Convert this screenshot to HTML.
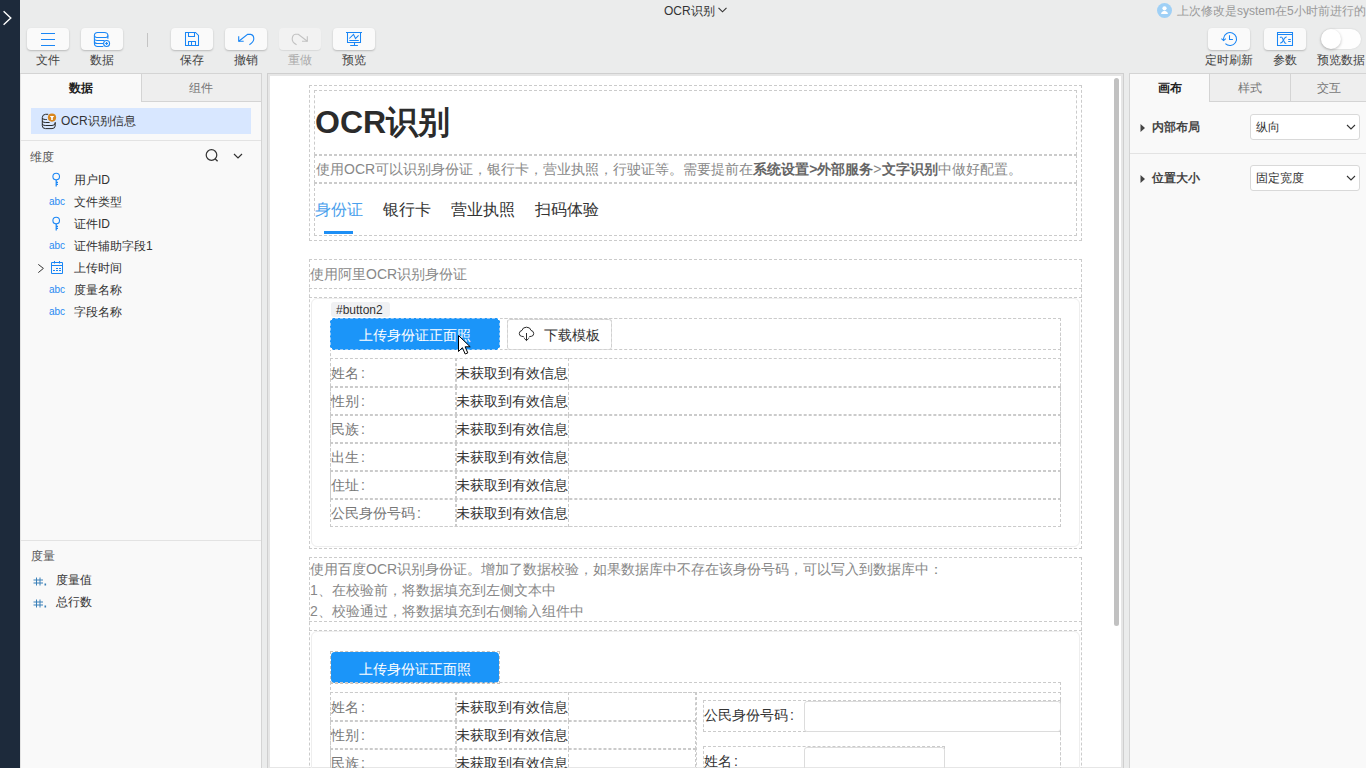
<!DOCTYPE html>
<html><head><meta charset="utf-8">
<style>
*{box-sizing:border-box;margin:0;padding:0}
html,body{width:1366px;height:768px;overflow:hidden;background:#ebecec;font-family:"Liberation Sans",sans-serif;color:#333}
.a{position:absolute}
#strip{left:0;top:0;width:20px;height:768px;background:#1d2a3b}
.tb{width:42px;height:22px;top:28px;background:#fafafa;border-radius:4px;box-shadow:0 1px 2px rgba(0,0,0,.22)}
.tl{top:53px;font-size:12px;width:60px;text-align:center;color:#444;line-height:14px}
.tb svg{position:absolute;left:0;top:0}
#lp{left:20px;top:73px;width:242px;height:695px;background:#f9f9f9;box-shadow:inset 1px 0 0 #e4e4e4;border-top:1px solid #d4d4d4;border-right:1px solid #d4d4d4}
#canvas{left:267px;top:73px;width:857px;height:697px;background:#fff;border:1px solid #cfcfcf;box-shadow:inset 0 0 0 2px #e6e6e6}
#rp{left:1129px;top:73px;width:237px;height:695px;background:#f9f9f9;border-top:1px solid #d4d4d4;border-left:1px solid #d4d4d4}
.d{position:absolute;border:1px dashed #cbcbcb}
.ct{font-size:14px;line-height:16px;position:absolute;white-space:nowrap}
i{display:inline-block;width:1em;text-align:center;font-style:normal}
</style></head><body>
<div id="strip" class="a">
  <svg class="a" style="left:0;top:0" width="20" height="36" viewBox="0 0 20 36"><path d="M3.6 11.2 L10.8 18 L3.6 24.8" fill="none" stroke="#fff" stroke-width="1.4"/></svg>
</div>

<!-- title -->
<div class="a" style="left:664px;top:4px;font-size:12px;line-height:15px;color:#333">OCR<i>识</i><i>别</i></div>
<svg class="a" style="left:717px;top:6px" width="11" height="8" viewBox="0 0 11 8"><path d="M1.5 1.8 L5.5 5.8 L9.5 1.8" fill="none" stroke="#333" stroke-width="1.1"/></svg>

<!-- last modified -->
<div class="a" style="left:1157px;top:3px;width:15px;height:15px;border-radius:50%;background:#9fd0f6"></div>
<svg class="a" style="left:1157px;top:3px" width="15" height="15" viewBox="0 0 15 15"><circle cx="7.5" cy="5.3" r="2.1" fill="#fff"/><path d="M4 11.1Q4.3 8.4 6.6 7.9H8.4Q10.7 8.4 11 11.1Z" fill="#fff"/></svg>
<div class="a" style="left:1177px;top:4px;font-size:12px;line-height:15px;color:#999;white-space:nowrap"><i>上</i><i>次</i><i>修</i><i>改</i><i>是</i>system<i>在</i>5<i>小</i><i>时</i><i>前</i><i>进</i><i>行</i><i>的</i></div>

<!-- toolbar left -->
<div class="a tb" style="left:27px"><svg width="42" height="22" viewBox="0 0 42 22"><path d="M14 5.5h14M14 11.5h14M14 17.5h14" stroke="#1a86f5" stroke-width="1.1"/></svg></div>
<div class="a tl" style="left:18px"><i>文</i><i>件</i></div>
<div class="a tb" style="left:81px"><svg width="42" height="22" viewBox="0 0 42 22"><g fill="none" stroke="#1a86f5" stroke-width="1.05"><path d="M13.4 7.5Q13.4 4.5 16.7 4.5H23.3Q26.9 4.5 26.9 7.5V10.8"/><path d="M13.4 7.5V15.3Q13.4 18.5 16.7 18.5H22.3"/><path d="M13.4 7.3Q13.6 9.5 15.8 9.5H24.8Q26.9 9.5 26.9 7.5"/><path d="M13.4 10.5Q13.6 12.5 16.2 12.5H23.5"/><path d="M13.4 13.4Q13.6 15.5 16.2 15.5H22.2"/><circle cx="25.6" cy="15.5" r="3"/></g><path d="M25.6 14.1V16.9M24.2 15.5H27" stroke="#1a86f5" stroke-width="1.1"/></svg></div>
<div class="a tl" style="left:72px"><i>数</i><i>据</i></div>
<div class="a" style="left:147px;top:33px;width:1px;height:14px;background:#c4c4c4"></div>
<div class="a tb" style="left:171px"><svg width="42" height="22" viewBox="0 0 42 22"><g fill="none" stroke="#1a86f5" stroke-width="1.05"><path d="M14.5 4.5H24.5L27.5 7.5V17.5H14.5Z"/><path d="M17.5 4.5V8.5H23.5V4.5"/><path d="M17.5 17.5V13.5H24.5V17.5M20.5 13.5V17.5"/></g></svg></div>
<div class="a tl" style="left:162px"><i>保</i><i>存</i></div>
<div class="a tb" style="left:225px"><svg width="42" height="22" viewBox="0 0 42 22"><g fill="none" stroke="#1a86f5" stroke-width="1.1"><path d="M18.7 13.3H13.7V8.2"/><path d="M13.8 13.2L22.6 6.4H25.6Q28.8 6.8 28.8 11Q28.5 14.3 24.4 16.7"/></g></svg></div>
<div class="a tl" style="left:216px"><i>撤</i><i>销</i></div>
<div class="a tb" style="left:279px;background:#f2f2f2;box-shadow:0 1px 1px rgba(0,0,0,.08)"><svg width="42" height="22" viewBox="0 0 42 22"><g fill="none" stroke="#c2c2c2" stroke-width="1.1"><path d="M23 13.3H28.3V8.2"/><path d="M17.6 16.7Q13.2 14.5 13.2 11Q13.5 6.6 16.5 6.3H19.3L28.3 13.2"/></g></svg></div>
<div class="a tl" style="left:270px;color:#aaa"><i>重</i><i>做</i></div>
<div class="a tb" style="left:333px"><svg width="42" height="22" viewBox="0 0 42 22"><g fill="none" stroke="#1a86f5" stroke-width="1.05"><path d="M13 4.5H29"/><path d="M14.5 4.5V14.5H27.5V4.5"/><path d="M16.3 12.5H25.8"/><path d="M16.3 10.5L20.5 6.3L22.5 10.5L25.6 7.3"/><path d="M21.5 14.5V17.5M17.2 17.5H24.9"/></g></svg></div>
<div class="a tl" style="left:324px"><i>预</i><i>览</i></div>

<!-- toolbar right -->
<div class="a tb" style="left:1208px"><svg width="42" height="22" viewBox="0 0 42 22"><g fill="none" stroke="#1a86f5" stroke-width="1.05"><path d="M17.4 15.6A6.5 6.5 0 1 0 15.6 10.2V12.4"/><path d="M13.4 10.6L15.6 12.6L17.8 10.6"/><path d="M21.5 7.3V11.5H24.9"/></g></svg></div>
<div class="a tl" style="left:1199px"><i>定</i><i>时</i><i>刷</i><i>新</i></div>
<div class="a tb" style="left:1264px"><svg width="42" height="22" viewBox="0 0 42 22"><g fill="none" stroke="#1a86f5" stroke-width="1.05"><path d="M13.5 4.5H28.5V17.5H13.5Z"/><path d="M13.5 6.5H28.5"/><path d="M16 9.6Q17.5 8.2 18.6 10.5L20.6 14.6Q21.3 15.8 22.2 15"/><path d="M22.6 8.8Q20.3 9.8 19.2 12.5Q18.3 14.6 16.2 15.2"/><path d="M24.2 11.5H26.8M24.2 13.5H26.8"/></g></svg></div>
<div class="a tl" style="left:1255px"><i>参</i><i>数</i></div>
<div class="a" style="left:1321px;top:29px;width:40px;height:20px;border-radius:10px;background:#fefefe;box-shadow:0 0 2px rgba(0,0,0,.12)"></div>
<div class="a" style="left:1321px;top:29px;width:20px;height:20px;border-radius:50%;background:#fff;box-shadow:0 1px 3px rgba(0,0,0,.25)"></div>
<div class="a tl" style="left:1311px;width:60px"><i>预</i><i>览</i><i>数</i><i>据</i></div>

<!-- left panel -->
<div id="lp" class="a">
  <div class="a" style="left:121px;top:0;width:120px;height:28px;background:#eeeeee;border-left:1px solid #d4d4d4;border-bottom:1px solid #d4d4d4"></div>
  <div class="a" style="left:0;top:7px;width:121px;text-align:center;font-size:12px;font-weight:bold;line-height:14px;color:#222"><i>数</i><i>据</i></div>
  <div class="a" style="left:121px;top:7px;width:120px;text-align:center;font-size:12px;line-height:14px;color:#777"><i>组</i><i>件</i></div>
  <div class="a" style="left:11px;top:34px;width:220px;height:26px;background:#d8e7ff"></div>
  <svg class="a" style="left:18px;top:36px" width="22" height="22" viewBox="0 0 22 22"><g fill="none" stroke="#2a2a2a" stroke-width="1"><path d="M10.2 4.3H7.5Q4.3 4.6 4.3 7.5V15.8Q4.3 18.6 7.5 18.6H14Q17.2 18.4 17.2 16V12"/><path d="M4.3 8Q4.6 9.5 7.3 9.5H8.8"/><path d="M4.3 11Q4.6 12.5 7.3 12.5H11.6"/><path d="M4.3 14Q4.6 15.5 7.3 15.5H14Q17.2 15.3 17.2 13"/></g><circle cx="14" cy="7.6" r="4.1" fill="#d8861e"/><path d="M11.8 5.9H16.2L14.8 7.8V10H13.2V7.8Z" fill="#fff"/></svg>
  <div class="a" style="left:41px;top:40px;font-size:12px;line-height:15px;color:#333;white-space:nowrap">OCR<i>识</i><i>别</i><i>信</i><i>息</i></div>
  <div class="a" style="left:0;top:66px;width:241px;height:1px;background:#e3e3e3"></div>
  <div class="a" style="left:10px;top:76px;font-size:12px;line-height:15px;color:#555"><i>维</i><i>度</i></div>
  <svg class="a" style="left:184px;top:74px" width="16" height="16" viewBox="0 0 16 16"><circle cx="7.5" cy="7" r="5.3" fill="none" stroke="#333" stroke-width="1.2"/><path d="M11.3 11l2.3 2.3" stroke="#333" stroke-width="1.3"/></svg>
  <svg class="a" style="left:212px;top:77px" width="12" height="10" viewBox="0 0 12 10"><path d="M2 3l4 4 4-4" fill="none" stroke="#333" stroke-width="1.2"/></svg>
  <!-- dims -->
<!--DIMS-->
  <svg class="a" style="left:31px;top:98px" width="12" height="16" viewBox="0 0 12 16"><circle cx="5.2" cy="4.6" r="3.3" fill="none" stroke="#1a86f5" stroke-width="1.1"/><path d="M5.2 8V14.4M5.2 10.4H7M5.2 12.4H7" stroke="#1a86f5" stroke-width="1.2"/></svg>
  <div class="a" style="left:54px;top:99px;font-size:12px;line-height:15px;color:#333;white-space:nowrap"><i>用</i><i>户</i>ID</div>
  <div class="a" style="left:29px;top:122px;font-size:10px;line-height:12px;color:#2a8af2">abc</div>
  <div class="a" style="left:54px;top:121px;font-size:12px;line-height:15px;color:#333;white-space:nowrap"><i>文</i><i>件</i><i>类</i><i>型</i></div>
  <svg class="a" style="left:31px;top:142px" width="12" height="16" viewBox="0 0 12 16"><circle cx="5.2" cy="4.6" r="3.3" fill="none" stroke="#1a86f5" stroke-width="1.1"/><path d="M5.2 8V14.4M5.2 10.4H7M5.2 12.4H7" stroke="#1a86f5" stroke-width="1.2"/></svg>
  <div class="a" style="left:54px;top:143px;font-size:12px;line-height:15px;color:#333;white-space:nowrap"><i>证</i><i>件</i>ID</div>
  <div class="a" style="left:29px;top:166px;font-size:10px;line-height:12px;color:#2a8af2">abc</div>
  <div class="a" style="left:54px;top:165px;font-size:12px;line-height:15px;color:#333;white-space:nowrap"><i>证</i><i>件</i><i>辅</i><i>助</i><i>字</i><i>段</i>1</div>
  <svg class="a" style="left:14px;top:184px" width="12" height="18" viewBox="0 0 12 18"><path d="M4.3 6.4L9.4 10.4L4.3 14.6" fill="none" stroke="#333" stroke-width="1"/></svg>
  <svg class="a" style="left:28px;top:184px" width="18" height="18" viewBox="0 0 18 18"><g fill="none" stroke="#1a86f5" stroke-width="1"><path d="M3.5 4.5H14.5V15.5H3.5Z"/><path d="M3.5 7.5H14.5"/><path d="M6.5 3V5.5M11.5 3V5.5"/></g><path d="M8 10.5H10M11 10.5H13M5 12.5H7M8 12.5H10M11 12.5H13" stroke="#1a86f5" stroke-width="1"/></svg>
  <div class="a" style="left:54px;top:187px;font-size:12px;line-height:15px;color:#333;white-space:nowrap"><i>上</i><i>传</i><i>时</i><i>间</i></div>
  <div class="a" style="left:29px;top:210px;font-size:10px;line-height:12px;color:#2a8af2">abc</div>
  <div class="a" style="left:54px;top:209px;font-size:12px;line-height:15px;color:#333;white-space:nowrap"><i>度</i><i>量</i><i>名</i><i>称</i></div>
  <div class="a" style="left:29px;top:232px;font-size:10px;line-height:12px;color:#2a8af2">abc</div>
  <div class="a" style="left:54px;top:231px;font-size:12px;line-height:15px;color:#333;white-space:nowrap"><i>字</i><i>段</i><i>名</i><i>称</i></div>
<!--/DIMS-->
  <div class="a" style="left:0;top:466px;width:241px;height:1px;background:#e3e3e3"></div>
  <div class="a" style="left:11px;top:475px;font-size:12px;line-height:15px;color:#555"><i>度</i><i>量</i></div>
  <svg class="a" style="left:13px;top:503px" width="14" height="9" viewBox="0 0 14 9"><path d="M3.5 0.5V8.5M7 0.5V8.5M0.5 3H10M0.5 6H10" stroke="#3a80b8" stroke-width="1"/><rect x="11.5" y="6.5" width="1.6" height="2" fill="#3a80b8"/></svg>
  <div class="a" style="left:36px;top:499px;font-size:12px;line-height:15px;color:#333"><i>度</i><i>量</i><i>值</i></div>
  <svg class="a" style="left:13px;top:525px" width="14" height="9" viewBox="0 0 14 9"><path d="M3.5 0.5V8.5M7 0.5V8.5M0.5 3H10M0.5 6H10" stroke="#3a80b8" stroke-width="1"/><rect x="11.5" y="6.5" width="1.6" height="2" fill="#3a80b8"/></svg>
  <div class="a" style="left:36px;top:521px;font-size:12px;line-height:15px;color:#333"><i>总</i><i>行</i><i>数</i></div>
</div>

<!-- canvas -->
<!--CANVAS-->
<div id="canvas" class="a" style="overflow:hidden">
<div class="a" style="left:-268px;top:-74px;width:1366px;height:768px">
<div class="d" style="left:309px;top:85px;width:773px;height:156px;"></div>
<div class="d" style="left:314px;top:90px;width:763px;height:65px;"></div>
<div class="d" style="left:314px;top:155px;width:763px;height:28px;"></div>
<div class="d" style="left:314px;top:183px;width:763px;height:53px;"></div>
<div class="a" style="left:315px;top:102px;font-size:32px;line-height:40px;font-weight:bold;color:#2b2b2b;white-space:nowrap">OCR<i>识</i><i>别</i></div>
<div class="ct" style="left:316px;top:161px;color:#888"><i>使</i><i>用</i>OCR<i>可</i><i>以</i><i>识</i><i>别</i><i>身</i><i>份</i><i>证</i><i>，</i><i>银</i><i>行</i><i>卡</i><i>，</i><i>营</i><i>业</i><i>执</i><i>照</i><i>，</i><i>行</i><i>驶</i><i>证</i><i>等</i><i>。</i><i>需</i><i>要</i><i>提</i><i>前</i><i>在</i><b style="color:#666"><i>系</i><i>统</i><i>设</i><i>置</i>&gt;<i>外</i><i>部</i><i>服</i><i>务</i></b>&gt;<b style="color:#666"><i>文</i><i>字</i><i>识</i><i>别</i></b><i>中</i><i>做</i><i>好</i><i>配</i><i>置</i><i>。</i></div>
<div class="a" style="left:315px;top:200px;font-size:16px;line-height:19px;color:#4aa0ec;white-space:nowrap"><i>身</i><i>份</i><i>证</i></div>
<div class="a" style="left:383px;top:200px;font-size:16px;line-height:19px;color:#333;white-space:nowrap"><i>银</i><i>行</i><i>卡</i></div>
<div class="a" style="left:451px;top:200px;font-size:16px;line-height:19px;color:#333;white-space:nowrap"><i>营</i><i>业</i><i>执</i><i>照</i></div>
<div class="a" style="left:535px;top:200px;font-size:16px;line-height:19px;color:#333;white-space:nowrap"><i>扫</i><i>码</i><i>体</i><i>验</i></div>
<div class="a" style="left:324px;top:231px;width:29px;height:3px;background:#1e8ff5"></div>
<div class="d" style="left:309px;top:259px;width:773px;height:290px;"></div>
<div class="d" style="left:309px;top:259px;width:773px;height:30px;border-top:none;border-left:none;border-right:none"></div>
<div class="ct" style="left:310px;top:266px;color:#888"><i>使</i><i>用</i><i>阿</i><i>里</i>OCR<i>识</i><i>别</i><i>身</i><i>份</i><i>证</i></div>
<div class="d" style="left:309px;top:297px;width:773px;height:252px;border-bottom:none;border-left:none;border-right:none"></div>
<div class="a" style="left:311px;top:298px;width:769px;height:249px;border:1px solid #eeeeee;border-radius:6px"></div>
<div class="a" style="left:331px;top:302px;width:59px;height:15px;background:#f0f1f3;border-radius:3px"></div>
<div class="a" style="left:336px;top:303px;font-size:12px;line-height:14px;color:#333">#button2</div>
<div class="d" style="left:330px;top:318px;width:731px;height:209px;"></div>
<div class="d" style="left:330px;top:318px;width:731px;height:32px;"></div>
<div class="a" style="left:330px;top:318px;width:170px;height:32px;background:#1b95f9;border:1px dashed #9ccbf5"></div>
<div class="a" style="left:330px;top:318px;width:2px;height:2px;background:#fff"></div>
<div class="a" style="left:498px;top:318px;width:2px;height:2px;background:#fff"></div>
<div class="a" style="left:330px;top:348px;width:2px;height:2px;background:#fff"></div>
<div class="a" style="left:498px;top:348px;width:2px;height:2px;background:#fff"></div>
<div class="ct" style="left:330px;top:327px;width:170px;text-align:center;color:#fff"><i>上</i><i>传</i><i>身</i><i>份</i><i>证</i><i>正</i><i>面</i><i>照</i></div>
<div class="a" style="left:507px;top:319px;width:105px;height:31px;background:#fff;border:1px solid #e0e0e0;border-radius:3px"></div>
<div class="d" style="left:507px;top:319px;width:105px;height:31px;border-radius:3px;border-color:#d0d0d0"></div>
<svg class="a" style="left:514px;top:322px" width="26" height="24" viewBox="0 0 26 24"><g fill="none" stroke="#2b2b2b" stroke-width="1"><path d="M10.2 15.3Q9.6 14.3 7.6 14.3Q5.3 14 5.3 11.5Q5.3 9 8 8.4Q8.6 5.2 12.5 5.2Q16.4 5.2 17 8.4Q19.7 9 19.7 11.5Q19.7 14 17.4 14.3Q15.4 14.3 14.8 15.3"/><path d="M12.5 11V18.5M10.2 16.3L12.5 18.6L14.8 16.3"/></g></svg>
<div class="ct" style="left:544px;top:327px;color:#333"><i>下</i><i>载</i><i>模</i><i>板</i></div>
<div class="d" style="left:330px;top:358px;width:731px;height:29px;"></div>
<div class="d" style="left:330px;top:358px;width:126px;height:29px;border-top:none;border-bottom:none;border-left:none"></div>
<div class="d" style="left:456px;top:358px;width:113px;height:29px;border-top:none;border-bottom:none"></div>
<div class="ct" style="left:331px;top:365px;color:#777"><i>姓</i><i>名</i><span style="margin-left:2px">:</span></div>
<div class="ct" style="left:456px;top:365px;color:#333"><i>未</i><i>获</i><i>取</i><i>到</i><i>有</i><i>效</i><i>信</i><i>息</i></div>
<div class="d" style="left:330px;top:387px;width:731px;height:28px;"></div>
<div class="d" style="left:330px;top:387px;width:126px;height:28px;border-top:none;border-bottom:none;border-left:none"></div>
<div class="d" style="left:456px;top:387px;width:113px;height:28px;border-top:none;border-bottom:none"></div>
<div class="ct" style="left:331px;top:393px;color:#777"><i>性</i><i>别</i><span style="margin-left:2px">:</span></div>
<div class="ct" style="left:456px;top:393px;color:#333"><i>未</i><i>获</i><i>取</i><i>到</i><i>有</i><i>效</i><i>信</i><i>息</i></div>
<div class="d" style="left:330px;top:415px;width:731px;height:28px;"></div>
<div class="d" style="left:330px;top:415px;width:126px;height:28px;border-top:none;border-bottom:none;border-left:none"></div>
<div class="d" style="left:456px;top:415px;width:113px;height:28px;border-top:none;border-bottom:none"></div>
<div class="ct" style="left:331px;top:421px;color:#777"><i>民</i><i>族</i><span style="margin-left:2px">:</span></div>
<div class="ct" style="left:456px;top:421px;color:#333"><i>未</i><i>获</i><i>取</i><i>到</i><i>有</i><i>效</i><i>信</i><i>息</i></div>
<div class="d" style="left:330px;top:443px;width:731px;height:28px;"></div>
<div class="d" style="left:330px;top:443px;width:126px;height:28px;border-top:none;border-bottom:none;border-left:none"></div>
<div class="d" style="left:456px;top:443px;width:113px;height:28px;border-top:none;border-bottom:none"></div>
<div class="ct" style="left:331px;top:449px;color:#777"><i>出</i><i>生</i><span style="margin-left:2px">:</span></div>
<div class="ct" style="left:456px;top:449px;color:#333"><i>未</i><i>获</i><i>取</i><i>到</i><i>有</i><i>效</i><i>信</i><i>息</i></div>
<div class="d" style="left:330px;top:471px;width:731px;height:28px;"></div>
<div class="d" style="left:330px;top:471px;width:126px;height:28px;border-top:none;border-bottom:none;border-left:none"></div>
<div class="d" style="left:456px;top:471px;width:113px;height:28px;border-top:none;border-bottom:none"></div>
<div class="ct" style="left:331px;top:477px;color:#777"><i>住</i><i>址</i><span style="margin-left:2px">:</span></div>
<div class="ct" style="left:456px;top:477px;color:#333"><i>未</i><i>获</i><i>取</i><i>到</i><i>有</i><i>效</i><i>信</i><i>息</i></div>
<div class="d" style="left:330px;top:499px;width:731px;height:28px;"></div>
<div class="d" style="left:330px;top:499px;width:126px;height:28px;border-top:none;border-bottom:none;border-left:none"></div>
<div class="d" style="left:456px;top:499px;width:113px;height:28px;border-top:none;border-bottom:none"></div>
<div class="ct" style="left:331px;top:505px;color:#777"><i>公</i><i>民</i><i>身</i><i>份</i><i>号</i><i>码</i><span style="margin-left:2px">:</span></div>
<div class="ct" style="left:456px;top:505px;color:#333"><i>未</i><i>获</i><i>取</i><i>到</i><i>有</i><i>效</i><i>信</i><i>息</i></div>
<div class="d" style="left:309px;top:557px;width:773px;height:344px;"></div>
<div class="d" style="left:309px;top:557px;width:773px;height:65px;border-top:none;border-left:none;border-right:none"></div>
<div class="ct" style="left:310px;top:559px;color:#888;line-height:21px"><i>使</i><i>用</i><i>百</i><i>度</i>OCR<i>识</i><i>别</i><i>身</i><i>份</i><i>证</i><i>。</i><i>增</i><i>加</i><i>了</i><i>数</i><i>据</i><i>校</i><i>验</i><i>，</i><i>如</i><i>果</i><i>数</i><i>据</i><i>库</i><i>中</i><i>不</i><i>存</i><i>在</i><i>该</i><i>身</i><i>份</i><i>号</i><i>码</i><i>，</i><i>可</i><i>以</i><i>写</i><i>入</i><i>到</i><i>数</i><i>据</i><i>库</i><i>中</i><i>：</i><br>1<i>、</i><i>在</i><i>校</i><i>验</i><i>前</i><i>，</i><i>将</i><i>数</i><i>据</i><i>填</i><i>充</i><i>到</i><i>左</i><i>侧</i><i>文</i><i>本</i><i>中</i><br>2<i>、</i><i>校</i><i>验</i><i>通</i><i>过</i><i>，</i><i>将</i><i>数</i><i>据</i><i>填</i><i>充</i><i>到</i><i>右</i><i>侧</i><i>输</i><i>入</i><i>组</i><i>件</i><i>中</i></div>
<div class="d" style="left:309px;top:630px;width:773px;height:271px;border-bottom:none;border-left:none;border-right:none"></div>
<div class="a" style="left:311px;top:631px;width:769px;height:300px;border:1px solid #eeeeee;border-radius:6px"></div>
<div class="a" style="left:331px;top:652px;width:168px;height:31px;background:#1b95f9;border-radius:4px"></div>
<div class="d" style="left:330px;top:651px;width:170px;height:33px;border-color:#c9c0b8"></div>
<div class="d" style="left:330px;top:682px;width:731px;height:219px;"></div>
<div class="ct" style="left:330px;top:661px;width:170px;text-align:center;color:#fff"><i>上</i><i>传</i><i>身</i><i>份</i><i>证</i><i>正</i><i>面</i><i>照</i></div>
<div class="d" style="left:330px;top:692px;width:731px;height:209px;"></div>
<div class="d" style="left:330px;top:692px;width:366px;height:29px;"></div>
<div class="d" style="left:330px;top:692px;width:126px;height:29px;border-top:none;border-bottom:none;border-left:none"></div>
<div class="d" style="left:456px;top:692px;width:113px;height:29px;border-top:none;border-bottom:none"></div>
<div class="ct" style="left:331px;top:699px;color:#777"><i>姓</i><i>名</i><span style="margin-left:2px">:</span></div>
<div class="ct" style="left:456px;top:699px;color:#333"><i>未</i><i>获</i><i>取</i><i>到</i><i>有</i><i>效</i><i>信</i><i>息</i></div>
<div class="d" style="left:330px;top:721px;width:366px;height:28px;"></div>
<div class="d" style="left:330px;top:721px;width:126px;height:28px;border-top:none;border-bottom:none;border-left:none"></div>
<div class="d" style="left:456px;top:721px;width:113px;height:28px;border-top:none;border-bottom:none"></div>
<div class="ct" style="left:331px;top:727px;color:#777"><i>性</i><i>别</i><span style="margin-left:2px">:</span></div>
<div class="ct" style="left:456px;top:727px;color:#333"><i>未</i><i>获</i><i>取</i><i>到</i><i>有</i><i>效</i><i>信</i><i>息</i></div>
<div class="d" style="left:330px;top:749px;width:366px;height:28px;"></div>
<div class="d" style="left:330px;top:749px;width:126px;height:28px;border-top:none;border-bottom:none;border-left:none"></div>
<div class="d" style="left:456px;top:749px;width:113px;height:28px;border-top:none;border-bottom:none"></div>
<div class="ct" style="left:331px;top:755px;color:#777"><i>民</i><i>族</i><span style="margin-left:2px">:</span></div>
<div class="ct" style="left:456px;top:755px;color:#333"><i>未</i><i>获</i><i>取</i><i>到</i><i>有</i><i>效</i><i>信</i><i>息</i></div>
<div class="d" style="left:696px;top:692px;width:365px;height:209px;border-top:none;border-right:none;border-bottom:none"></div>
<div class="d" style="left:703px;top:700px;width:358px;height:32px;"></div>
<div class="ct" style="left:704px;top:707px;color:#333"><i>公</i><i>民</i><i>身</i><i>份</i><i>号</i><i>码</i><span style="margin-left:2px">:</span></div>
<div class="a" style="left:804px;top:701px;width:257px;height:31px;border:1px solid #dcdcdc;border-radius:3px"></div>
<div class="d" style="left:703px;top:746px;width:242px;height:155px;"></div>
<div class="ct" style="left:704px;top:753px;color:#333"><i>姓</i><i>名</i><span style="margin-left:2px">:</span></div>
<div class="a" style="left:804px;top:747px;width:141px;height:31px;border:1px solid #dcdcdc;border-radius:3px"></div>
<div class="a" style="left:1114px;top:78px;width:5px;height:548px;background:#c1c1c1;border-radius:3px"></div>
</div>
</div>
<!--/CANVAS-->

<!-- right panel -->
<div id="rp" class="a">
  <div class="a" style="left:79px;top:0;width:82px;height:28px;background:#eeeeee;border-left:1px solid #d4d4d4;border-bottom:1px solid #d4d4d4"></div>
  <div class="a" style="left:160px;top:0;width:77px;height:28px;background:#eeeeee;border-left:1px solid #d4d4d4;border-bottom:1px solid #d4d4d4"></div>
  <div class="a" style="left:0;top:7px;width:79px;text-align:center;font-size:12px;font-weight:bold;line-height:14px;color:#222"><i>画</i><i>布</i></div>
  <div class="a" style="left:79px;top:7px;width:81px;text-align:center;font-size:12px;line-height:14px;color:#777"><i>样</i><i>式</i></div>
  <div class="a" style="left:160px;top:7px;width:77px;text-align:center;font-size:12px;line-height:14px;color:#777"><i>交</i><i>互</i></div>
  <svg class="a" style="left:10px;top:49px" width="6" height="10" viewBox="0 0 6 10"><path d="M0.5 1L5 5 0.5 9z" fill="#444"/></svg>
  <div class="a" style="left:22px;top:46px;font-size:12px;font-weight:bold;line-height:15px;color:#444"><i>内</i><i>部</i><i>布</i><i>局</i></div>
  <div class="a" style="left:120px;top:40px;width:110px;height:26px;background:#fff;border:1px solid #d9d9d9;border-radius:3px"></div>
  <div class="a" style="left:126px;top:46px;font-size:12px;line-height:15px;color:#333"><i>纵</i><i>向</i></div>
  <svg class="a" style="left:216px;top:49px" width="10" height="8" viewBox="0 0 10 8"><path d="M1 2l4 4 4-4" fill="none" stroke="#333" stroke-width="1.1"/></svg>
  <div class="a" style="left:0;top:79px;width:237px;height:1px;background:#e3e3e3"></div>
  <svg class="a" style="left:10px;top:100px" width="6" height="10" viewBox="0 0 6 10"><path d="M0.5 1L5 5 0.5 9z" fill="#444"/></svg>
  <div class="a" style="left:22px;top:97px;font-size:12px;font-weight:bold;line-height:15px;color:#444"><i>位</i><i>置</i><i>大</i><i>小</i></div>
  <div class="a" style="left:120px;top:91px;width:110px;height:26px;background:#fff;border:1px solid #d9d9d9;border-radius:3px"></div>
  <div class="a" style="left:126px;top:97px;font-size:12px;line-height:15px;color:#333"><i>固</i><i>定</i><i>宽</i><i>度</i></div>
  <svg class="a" style="left:216px;top:100px" width="10" height="8" viewBox="0 0 10 8"><path d="M1 2l4 4 4-4" fill="none" stroke="#333" stroke-width="1.1"/></svg>
</div>
<svg class="a" style="left:458px;top:335px" width="14" height="21" viewBox="0 0 14 21"><path d="M0.5 0.5V16.5L4.4 12.7L7.2 19L9.8 17.9L7.1 11.8H12.2Z" fill="#fff" stroke="#000" stroke-width="1" stroke-linejoin="miter"/></svg>
</body></html>
